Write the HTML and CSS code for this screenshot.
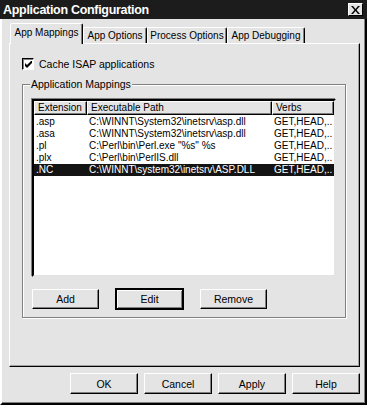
FILE: index.html
```html
<!DOCTYPE html>
<html>
<head>
<meta charset="utf-8">
<link rel="stylesheet" href="styles.css">
</head>
<body>
<div class="dialog">
  <div class="titlebar">
    <span class="title">Application Configuration</span>
    <span class="close"><svg width="9" height="8" viewBox="0 0 9 8"><path d="M0 0h2l2.5 3 2.5-3h2L5.5 4 9 8H7L4.5 5 2 8H0l3.5-4z" fill="#000"/></svg></span>
  </div>
  <div class="body">
    <div class="tabs">
      <div class="tab active">App Mappings</div>
      <div class="tab w2">App Options</div>
      <div class="tab w3">Process Options</div>
      <div class="tab w4">App Debugging</div>
    </div>
    <div class="panel">
      <label class="check">
        <span class="box"><svg width="7" height="7" viewBox="0 0 7 7"><path d="M0 2v3l2 2 5-5V-1L2 4z" fill="#000"/></svg></span>
        <span>Cache ISAP applications</span>
      </label>
      <fieldset class="group">
        <legend>Application Mappings</legend>
        <div class="list">
          <div class="row head">
            <div class="hc c1">Extension</div>
            <div class="hc c2">Executable Path</div>
            <div class="hc c3">Verbs</div>
          </div>
          <div class="row"><div class="c1">.asp</div><div class="c2">C:\WINNT\System32\inetsrv\asp.dll</div><div class="c3">GET,HEAD,..</div></div>
          <div class="row"><div class="c1">.asa</div><div class="c2">C:\WINNT\System32\inetsrv\asp.dll</div><div class="c3">GET,HEAD,..</div></div>
          <div class="row"><div class="c1">.pl</div><div class="c2">C:\Perl\bin\Perl.exe "%s" %s</div><div class="c3">GET,HEAD,..</div></div>
          <div class="row"><div class="c1">.plx</div><div class="c2">C:\Perl\bin\PerlIS.dll</div><div class="c3">GET,HEAD,..</div></div>
          <div class="row sel"><div class="c1">.NC</div><div class="c2">C:\WINNT\system32\inetsrv\ASP.DLL</div><div class="c3">GET,HEAD,..</div></div>
        </div>
        <div class="actions">
          <button class="btn">Add</button>
          <button class="btn default">Edit</button>
          <button class="btn">Remove</button>
        </div>
      </fieldset>
    </div>
    <div class="footer">
      <button class="btn fb">OK</button>
      <button class="btn fb">Cancel</button>
      <button class="btn fb">Apply</button>
      <button class="btn fb">Help</button>
    </div>
  </div>
</div>
</body>
</html>
```

FILE: styles.css
```css
* { box-sizing: border-box; }
html, body { margin: 0; padding: 0; background: #e4e4e4; }
body { font-family: "Liberation Sans", Arial, sans-serif; font-size: 10px; color: #000; }

.dialog { width: 367px; height: 405px; display: flex; flex-direction: column; background: #e4e4e4; }

.titlebar {
  height: 19px; flex: none; background: #1c1c1c; color: #fff;
  display: flex; align-items: center; justify-content: space-between;
  padding: 0 4px 0 3px;
}
.title { font-weight: bold; font-size: 12.5px; letter-spacing: -0.3px; }
.close {
  width: 15px; height: 13px; background: #e4e4e4;
  border: 1px solid; border-color: #fff #000 #000 #fff;
  display: flex; align-items: center; justify-content: center;
}

.body {
  flex: 1; display: flex; flex-direction: column;
  border-left: 2px solid #fff; border-right: 2px solid #000; border-bottom: 2px solid #000;
  box-shadow: inset -1px -1px 0 #808080;
  padding: 4px 5px 0 7px;
}

.tabs { display: flex; align-items: flex-end; height: 20px; padding-left: 1px; }
.tab {
  height: 16px; display: flex; align-items: center; justify-content: center; white-space: nowrap;
  border: 1px solid; border-bottom: none; border-color: #fff #000 transparent #fff;
  box-shadow: inset -1px 0 0 #808080;
  border-radius: 2px 2px 0 0;
}
.tab.active { height: 21px; width: 73px; margin-bottom: -1px; background: #e4e4e4; position: relative; z-index: 1; padding-bottom: 3px; }
.tab.w2 { width: 64px; }
.tab.w3 { width: 80px; }
.tab.w4 { width: 78px; }

.panel {
  width: 351px; height: 324px;
  border: 1px solid; border-color: #fff #000 #000 #fff;
  box-shadow: inset -1px -1px 0 #a0a0a0;
  padding: 13px 0 0 12px;
}

.check { display: flex; align-items: center; gap: 5px; height: 13px; font-size: 10.5px; }
.box {
  width: 12px; height: 12px; background: #fff;
  border: 1px solid; border-color: #000 #fff #fff #000;
  box-shadow: inset 1px 1px 0 #808080;
  display: flex; align-items: center; justify-content: center; padding: 1px 0 0 1px;
}

.group {
  margin: 8px 0 0 0; width: 324px; height: 240px;
  border: 1px solid #808080;
  box-shadow: 1px 1px 0 #fff, inset 1px 1px 0 #fff;
  padding: 0 9px 0 9px;
}
.group legend { padding: 0 1px; margin-left: -2px; line-height: 13px; background: #e4e4e4; font-size: 10.5px; }

.list {
  margin-top: 8px; width: 304px; height: 178px; background: #fff;
  border: 2px solid; border-color: #000 #e4e4e4 #e4e4e4 #000;
  box-shadow: -1px -1px 0 #808080;
  overflow: hidden;
}
.row { display: grid; grid-template-columns: 53px 185px 62px; height: 12px; line-height: 12px; white-space: nowrap; }
.row > div { overflow: hidden; padding-left: 2px; }
.row.head { height: 14px; line-height: 12px; margin-bottom: 1px; }
.hc {
  background: #e4e4e4; border: 1px solid; border-color: #fff #000 #000 #fff;
  box-shadow: inset -1px -1px 0 #808080; padding-left: 3px !important;
}
.row.sel { background: #141414; color: #fff; }

.actions { display: flex; gap: 17px; margin-top: 12px; }

.btn {
  font: inherit; font-size: 10.5px; color: #000; background: #e4e4e4; padding: 0;
  width: 67px; height: 20px;
  border: 1px solid; border-color: #fff #000 #000 #fff;
  box-shadow: inset -1px -1px 0 #808080;
}
.btn.default { outline: 1px solid #000; outline-offset: 0; border-top-color: #000; border-left-color: #000; box-shadow: inset 1px 1px 0 #fff, inset -1px -1px 0 #808080; }

.footer { display: flex; justify-content: flex-end; gap: 6px; margin-top: 6px; }
.btn.fb { width: 68px; height: 21px; }
```
